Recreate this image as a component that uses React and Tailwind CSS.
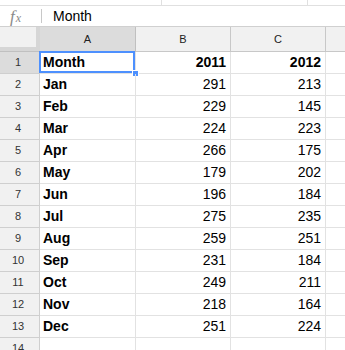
import React from "react";

const rows = [
  ["Month", "2011", "2012"],
  ["Jan", "291", "213"],
  ["Feb", "229", "145"],
  ["Mar", "224", "223"],
  ["Apr", "266", "175"],
  ["May", "179", "202"],
  ["Jun", "196", "184"],
  ["Jul", "275", "235"],
  ["Aug", "259", "251"],
  ["Sep", "231", "184"],
  ["Oct", "249", "211"],
  ["Nov", "218", "164"],
  ["Dec", "251", "224"],
  ["", "", ""],
];

export default function App() {
  return (
    <div className="w-[345px] h-[350px] overflow-hidden bg-white font-['Liberation_Sans',Arial,sans-serif] text-black">
      {/* toolbar remnant */}
      <div className="flex h-[6px] border-b border-[#e0e0e0]">
        <div className="w-[162px] border-r border-[#e0e0e0]" />
        <div className="w-[146px] border-r border-[#e0e0e0]" />
      </div>
      {/* formula bar */}
      <div className="flex items-center h-[21px] border-b border-[#d0d0d0]">
        <div className="w-[41px] flex items-center pl-[10px] text-[#8a8a8a] font-['Liberation_Serif',serif] italic leading-none">
          <span className="text-[17px]">f</span>
          <span className="text-[12px] mt-[4px] ml-[1px]">x</span>
        </div>
        <div className="w-px h-[14px] bg-[#c8c8c8]" />
        <div className="pl-[11px] text-[14px] leading-none">Month</div>
      </div>
      {/* grid */}
      <div className="grid grid-cols-[40px_96px_95px_95px_1fr] grid-rows-[25px] auto-rows-[22px]">
        {/* corner */}
        <div className="bg-[#d6d6d6] border-b border-[#c0c0c0] flex">
          <div className="w-[36px] h-[20px] bg-[#f1f1f1]" />
        </div>
        <div className="bg-[#dcdcdc] border-r border-b border-[#c0c0c0] flex items-center justify-center text-[11px] text-[#222]">A</div>
        <div className="bg-[#f1f1f1] border-r border-b border-[#c8c8c8] flex items-center justify-center text-[11px] text-[#222]">B</div>
        <div className="bg-[#f1f1f1] border-r border-b border-[#c8c8c8] flex items-center justify-center text-[11px] text-[#222]">C</div>
        <div className="bg-[#f1f1f1] border-b border-[#c8c8c8]" />

        {rows.map((r, i) => {
          const first = i === 0;
          return (
            <React.Fragment key={i}>
              <div
                className={`${first ? "bg-[#dcdcdc]" : "bg-[#f1f1f1]"} border-r border-b border-[#cfcfcf] flex items-center justify-center pr-[3px] text-[11px] text-[#333]`}
              >
                {i + 1}
              </div>
              <div className="relative border-r border-b border-[#e2e2e2] flex items-center pl-[3px] text-[14px] font-bold">
                {r[0]}
                {first && (
                  <>
                    <div className="absolute -left-px -top-px right-0 bottom-0 border-2 border-[#4d90fe]" />
                    <div className="absolute -right-[4px] -bottom-[4px] w-[7px] h-[7px] bg-[#4d90fe] border border-white" />
                  </>
                )}
              </div>
              <div className={`border-r border-b border-[#e2e2e2] flex items-center justify-end pr-[4px] text-[14px] ${first ? "font-bold" : ""}`}>
                {r[1]}
              </div>
              <div className={`border-r border-b border-[#e2e2e2] flex items-center justify-end pr-[4px] text-[14px] ${first ? "font-bold" : ""}`}>
                {r[2]}
              </div>
              <div className="border-b border-[#e2e2e2]" />
            </React.Fragment>
          );
        })}
      </div>
    </div>
  );
}
